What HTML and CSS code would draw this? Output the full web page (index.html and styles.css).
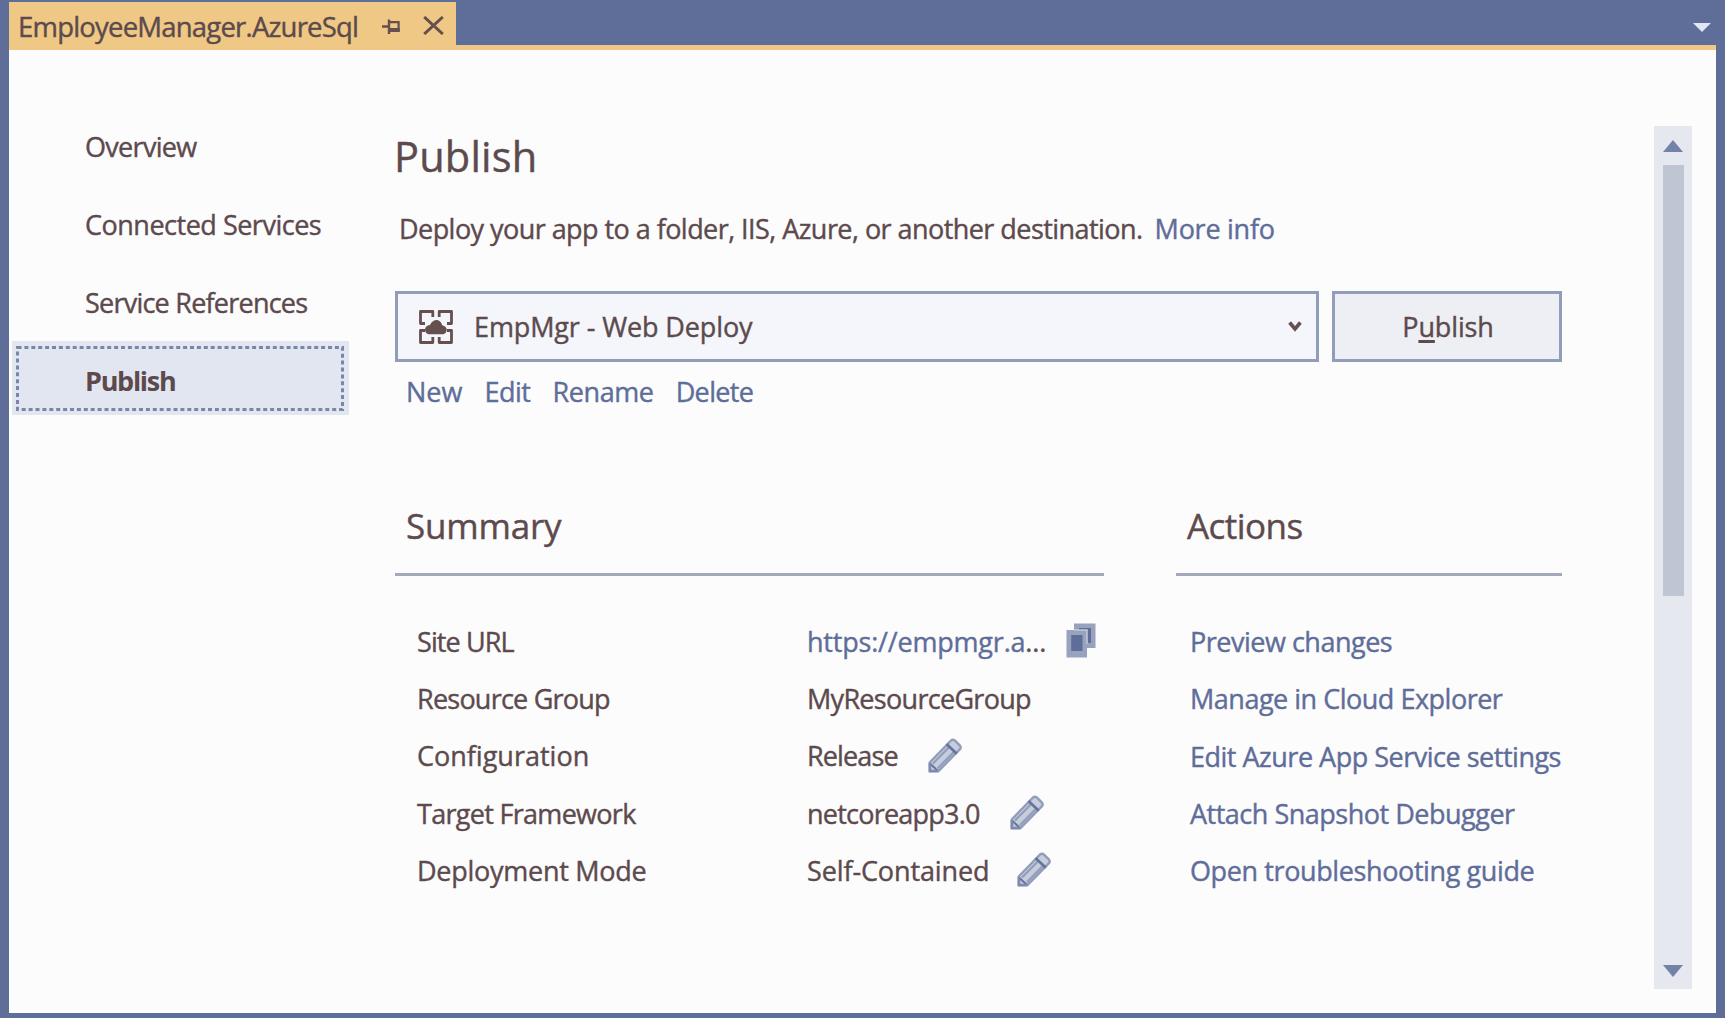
FILE: index.html
```html
<!DOCTYPE html>
<html lang="en">
<head>
<meta charset="utf-8">
<title>EmployeeManager.AzureSql</title>
<link rel="stylesheet" href="styles.css">
</head>
<body>
<svg class="defs" aria-hidden="true">
  <symbol id="pencil" viewBox="0 0 34 35">
    <path d="M1.7 24.5 23 2.5Q25 1 27 2.600L32 7.600Q33.300 9.500 32 11.200L10.200 33.300H1.700Z" fill="#c6cddd" stroke="#929db9" stroke-width="2.400" stroke-linejoin="round"/>
    <path d="M5 25.500 21 9.200M9.800 30.200 26 13.800" stroke="#929db9" stroke-width="2.200"/>
    <path d="M18.500 6 28.800 15.800" stroke="#65739f" stroke-width="2.600"/>
    <path d="M2 25.500 9.700 32.700" stroke="#65739f" stroke-width="2"/>
    <path d="M2 25V33H9.500" fill="none" stroke="#7e8bae" stroke-width="2.600"/>
  </symbol>
</svg>
<div class="window">
  <header class="tabs">
    <div class="tab">
      <span class="tab-title">EmployeeManager.AzureSql</span>
      <svg class="pin" width="19" height="16" viewBox="0 0 19 16"><path d="M0 7.500H7M7 .5V15" fill="none" stroke="#65504f" stroke-width="2.400"/><path d="M7.500 3.200H16.600V12.500" fill="none" stroke="#65504f" stroke-width="2.200"/><path d="M7.500 11H17.700" stroke="#65504f" stroke-width="4"/></svg>
      <svg class="close" width="21" height="19" viewBox="0 0 21 19"><path d="M1.2 1 19.8 18M19.8 1 1.2 18" stroke="#65504f" stroke-width="3"/></svg>
    </div>
    <svg class="tab-menu" width="18" height="9" viewBox="0 0 18 9"><path d="M0 0H18L9 9Z" fill="#e2e6f1"/></svg>
  </header>
  <div class="panel">
    <nav class="nav">
      <a class="nav-item t7">Overview</a>
      <a class="nav-item t5">Connected Services</a>
      <a class="nav-item t8">Service References</a>
      <a class="nav-item selected">Publish
        <svg class="focus" width="328" height="65"><rect x="1.5" y="1.5" width="325" height="62" fill="none" stroke="#7a86a9" stroke-width="3" stroke-dasharray="4 2.9"/></svg>
      </a>
    </nav>
    <main class="main">
      <h1>Publish</h1>
      <p class="lead"><span class="t55">Deploy your app to a folder, IIS, Azure, or another destination.</span><a class="more t25">More info</a></p>
      <div class="profile">
        <div class="combo">
          <svg width="34" height="34" viewBox="0 0 34 34"><path d="M6 13.500H1.500V1.500H13.800V7M20.200 7V1.500H32.500V13.500H28M6 20.500H1.500V32.500H13.800V27M20.200 27V32.500H32.500V20.500H28" fill="none" stroke="#65504f" stroke-width="2.800" stroke-linejoin="round"/><path d="M9.500 24.200Q6 23 6 19.500 6.200 15.800 11 15 12 12.500 14 11.200 17.500 8.800 20.500 11 22.500 12.500 23.200 15.200 27.700 16.500 27.800 20 27.500 23 24.500 24.200Z" fill="#65504f"/></svg>
          <span class="combo-text t1">EmpMgr - Web Deploy</span>
          <svg width="14" height="12" viewBox="0 0 14 12"><path d="M1.600 1.500 7 8 12.400 1.500" fill="none" stroke="#65504f" stroke-width="3.600"/></svg>
        </div>
        <button class="publish t1">P<u>u</u>blish</button>
      </div>
      <div class="links"><a>New</a><a class="t5">Edit</a><a class="t4">Rename</a><a class="t6">Delete</a></div>
      <div class="columns">
        <section class="summary">
          <h2 class="t2">Summary</h2>
          <dl>
            <dt class="t9">Site URL</dt>
            <dd><span class="t2"><a>https://empmgr.a</a>...</span>
              <svg class="copy" width="30" height="35" viewBox="0 0 30 35"><path d="M8 .5H29.500V25H8Z" fill="#98a2bd"/><path d="M13 5H25V20H13Z" fill="#5f6d99"/><path d="M.5 7H21V34.500H.5Z" fill="#98a2bd"/><path d="M8 7H21V21" fill="none" stroke="#c3cadb" stroke-width="1.500"/><path d="M5.200 12H16.500V28H5.200Z" fill="#5f6d99"/></svg></dd>
            <dt class="t8">Resource Group</dt>
            <dd><span class="t7">MyResourceGroup</span></dd>
            <dt>Configuration</dt>
            <dd><span class="t9">Release</span><svg class="edit" width="34" height="35"><use href="#pencil"/></svg></dd>
            <dt class="t7">Target Framework</dt>
            <dd><span class="t8">netcoreapp3.0</span><svg class="edit" width="34" height="35"><use href="#pencil"/></svg></dd>
            <dt class="t25">Deployment Mode</dt>
            <dd><span class="t1">Self-Contained</span><svg class="edit edit-mode" width="34" height="35"><use href="#pencil"/></svg></dd>
          </dl>
        </section>
        <section class="actions">
          <h2 class="t55">Actions</h2>
          <ul>
            <li class="t5">Preview changes</li>
            <li class="t5">Manage in Cloud Explorer</li>
            <li class="t5">Edit Azure App Service settings</li>
            <li class="t5">Attach Snapshot Debugger</li>
            <li class="t4">Open troubleshooting guide</li>
          </ul>
        </section>
      </div>
    </main>
    <div class="scrollbar">
      <svg width="20" height="12" viewBox="0 0 20 12"><path d="M10 0 20 12H0Z" fill="#7582a8"/></svg>
      <div class="thumb"></div>
      <svg class="down" width="20" height="12" viewBox="0 0 20 12"><path d="M0 0H20L10 12Z" fill="#7582a8"/></svg>
    </div>
  </div>
</div>
</body>
</html>
```
FILE: styles.css
```css
* { box-sizing: border-box; }
body {
  margin: 0;
  background: #5f6d99;
  color: #5c4a4d;
  font: 27px/40px "Open Sans", "Noto Sans", sans-serif;
  -webkit-text-stroke: .4px currentColor;
  white-space: nowrap;
}
h1, h2, p, dl, dd, ul { margin: 0; padding: 0; font-weight: 400; }
ul { list-style: none; }
a, li { color: #5f6d99; }
svg { display: block; flex: none; }
.defs { position: absolute; width: 0; height: 0; }

/* letter tracking */
.t1 { letter-spacing: -.12px; }
.t2 { letter-spacing: -.2px; }
.t25 { letter-spacing: -.26px; }
.t4 { letter-spacing: -.39px; }
.t5 { letter-spacing: -.49px; }
.t55 { letter-spacing: -.55px; }
.t6 { letter-spacing: -.63px; }
.t7 { letter-spacing: -.7px; }
.t8 { letter-spacing: -.77px; }
.t9 { letter-spacing: -.88px; }

.window { display: flex; flex-direction: column; width: 1725px; height: 1018px; padding: 2px 9px 5px 9px; }
.tabs { display: flex; justify-content: space-between; height: 48px; border-bottom: 5px solid #eec884; flex: none; }
.tab { display: flex; width: 447px; height: 48px; padding: 0 0 0 9px; background: #eec884; }
.tab-title { width: 364px; font-size: 27.500px; line-height: 50px; letter-spacing: -.8px; }
.pin { margin-top: 17px; }
.close { margin: 14px 0 0 22px; }
.tab-menu { margin: 21px 5px 0 0; }

.panel { display: flex; flex: 1; width: 1707px; background: #fcfcfd; }
.nav { display: flex; flex-direction: column; gap: 4px; width: 386px; padding: 57px 0 0 3px; flex: none; }
.nav-item { position: relative; width: 337px; height: 74px; padding: 2px 0 0 73px; line-height: 75px; color: inherit; }
.selected { background: #e2e6f1; font-weight: 700; letter-spacing: -1.300px; -webkit-text-stroke: 0; }
.focus { position: absolute; left: 4px; top: 5px; }

.main { width: 1167px; padding-top: 81px; flex: none; }
h1 { font-size: 41.500px; line-height: 51px; letter-spacing: .2px; margin-left: -1px; }
.lead { margin: 27px 0 0 4px; display: flex; }
.more { margin-left: 12px; }
.profile { display: flex; justify-content: space-between; height: 71px; margin-top: 42px; }
.combo { display: flex; align-items: center; width: 924px; padding: 0 14px 0 21px; background: #f4f6fb; border: 3px solid #929db9; }
.combo-text { flex: 1; margin-left: 21px; padding-top: 1px; }
.publish { width: 230px; padding: 1px 0 0 2px; background: #eeeff5; border: 3px solid #929db9; border-radius: 0; color: inherit; font: inherit; letter-spacing: -.15px; }
.publish u { text-decoration-thickness: 3px; text-underline-offset: 3px; text-decoration-skip-ink: none; }
.links { display: flex; gap: 22px; margin: 10px 0 0 11px; }
.columns { display: flex; justify-content: space-between; margin-top: 88px; }
h2 { height: 76px; border-bottom: 3px solid #a3a8bb; font-size: 35px; line-height: 52px; padding-left: 11px; }
.summary { width: 709px; }
.actions { width: 386px; }
dl { display: grid; grid-template-columns: 390px 1fr; grid-auto-rows: 57.300px; align-items: center; padding: 36px 0 0 22px; }
dt, dd span { padding-top: 2px; }
dd { display: flex; align-items: center; }
.copy { margin-left: 20px; }
.edit { margin-left: 30px; }
.edit-mode { margin-left: 28px; }
ul { padding: 37px 0 0 14px; }
li { height: 57.300px; line-height: 57.300px; }

.scrollbar { display: flex; flex-direction: column; align-items: center; width: 38px; height: 863px; margin: 76px 0 0 92px; padding: 14px 0 12px; background: #e6e8ef; }
.thumb { width: 21px; height: 431px; margin-top: 13px; background: #bfc5d3; }
.down { margin-top: auto; }
```
